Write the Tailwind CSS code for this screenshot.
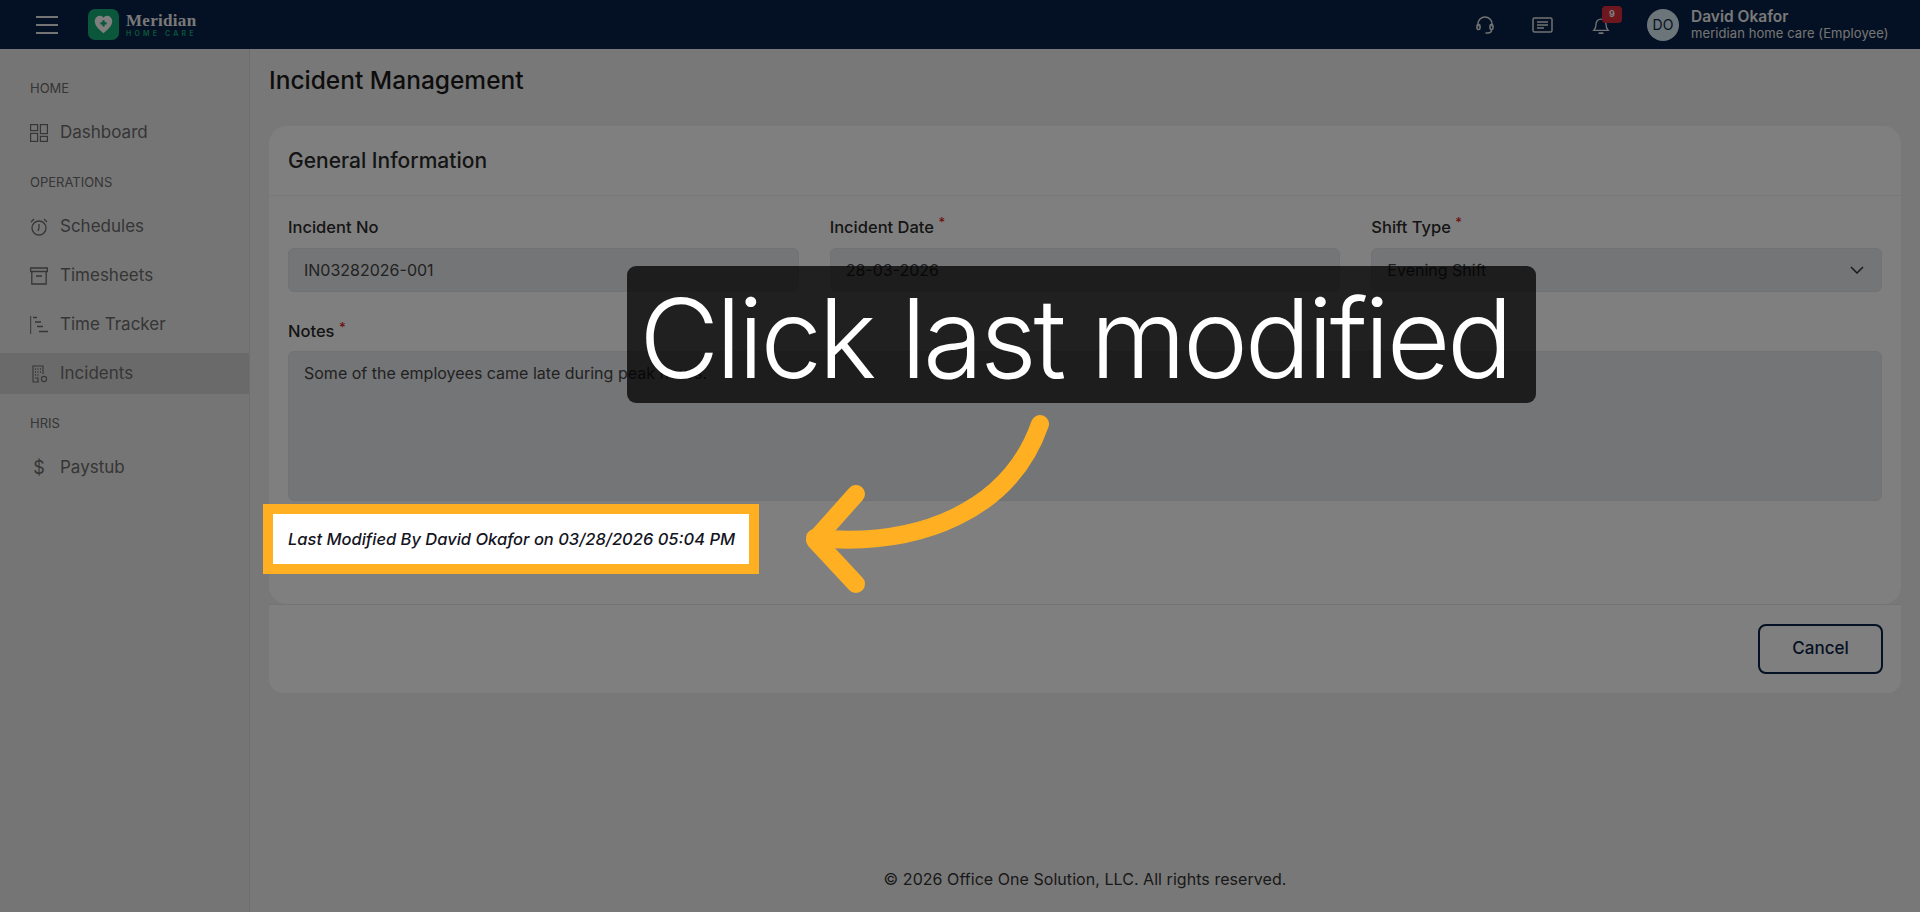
<!DOCTYPE html>
<html lang="en">
  <head>
    <meta charset="UTF-8" />
    <meta name="viewport" content="width=device-width, initial-scale=1.0" />
    <title>Incident Management</title>
    <script src="https://cdn.jsdelivr.net/npm/@tailwindcss/browser@4"></script>
  </head>
  <body class="relative h-[912px] overflow-hidden bg-[#f0f0f0] font-['Inter',sans-serif] text-[#2a2a2a]">
    <header class="flex h-[49px] items-center bg-[#082046] pr-[32px] pl-[36px]">
      <svg class="h-[20px] w-[22px] text-[#e8e8e8]" viewBox="0 0 22 20" fill="none" stroke="currentColor" stroke-width="2"><path d="M0 2h22M0 10h22M0 18h22" /></svg>
      <div class="ml-[30px] flex h-[31px] w-[31px] items-center justify-center rounded-[7px] bg-[#17ae78]">
        <svg class="h-[19px] w-[19px]" viewBox="0 0 24 24"><path d="M12 23 C7 19 1 14 1 8 C1 3.5 4.5 1 7.5 1 C9.5 1 11 2 12 3.5 C13 2 14.5 1 16.5 1 C19.5 1 23 3.500 23 8 C23 14 17 19 12 23Z" fill="#fff" /><path d="M12 6.500v8M8 10.500h8" stroke="#17ae78" stroke-width="3" /></svg>
      </div>
      <div class="ml-[7px] flex flex-col">
        <span class="font-['Liberation_Serif',serif] text-[17px] leading-[17px] font-bold tracking-[0.3px] text-[#f2f2f2]">Meridian</span>
        <span class="text-[7px] leading-[9px] font-semibold tracking-[3.200px] text-[#17ae78]">HOME CARE</span>
      </div>
      <div class="ml-auto flex items-center">
        <svg class="h-[20px] w-[18px] text-[#e4e4e4]" viewBox="0 0 18 20" fill="none" stroke="currentColor" stroke-width="1.600" stroke-linecap="round"><path d="M2 11V9a7 7 0 0 1 14 0v2" /><rect x="1" y="9.500" width="3" height="5" rx="1.400" /><rect x="14" y="9.500" width="3" height="5" rx="1.400" /><path d="M15.500 15c0 2-2 3-4 3H10" /></svg>
        <svg class="ml-[38px] h-[18px] w-[21px] text-[#e4e4e4]" viewBox="0 0 21 18" fill="none" stroke="currentColor" stroke-width="1.500"><rect x="1" y="2" width="19" height="14" rx="1.500" /><path d="M5 6h11M5 9h11M5 12h7" /></svg>
        <div class="relative ml-[39px]">
          <svg class="h-[22px] w-[18px] text-[#e4e4e4]" viewBox="0 0 20 22" fill="none" stroke="currentColor" stroke-width="1.500" stroke-linecap="round"><path d="M2 17c2-2 2.500-4 2.500-7a5.500 5.500 0 0 1 11 0c0 3 .5 5 2.500 7Z" /><path d="M8 20h4" stroke-width="2" /></svg>
          <span class="absolute -top-[8px] left-[10px] flex h-[17px] w-[20px] items-center justify-center rounded-[4px] bg-[#dc2f3f] text-[9px] font-bold text-white">9</span>
        </div>
        <div class="ml-[37px] flex h-[32px] w-[32px] items-center justify-center rounded-full bg-[#d6eaf5] text-[14px] text-[#0f2545]">DO</div>
        <div class="ml-[12px] flex w-[197px] flex-col whitespace-nowrap">
          <span class="text-[15.500px] leading-[17px] font-semibold text-[#f2f2f2]">David Okafor</span>
          <span class="text-[13px] leading-[16px] tracking-[0.08px] text-[#e8e8e8]">meridian home care (Employee)</span>
        </div>
      </div>
    </header>

    <div class="flex h-[863px]">
      <aside class="w-[250px] shrink-0 border-r border-[#dcdcdc] bg-[#ebebeb] pt-[27px] text-[#6c6c6c]">
        <p class="pl-[30px] text-[13px] leading-[24px]">HOME</p>
        <nav class="mt-[12px] mb-[17px] flex flex-col gap-[8px]">
          <a class="flex h-[41px] items-center pt-[1px] pl-[30px] text-[17px]"><svg class="mr-[12px] h-[18px] w-[18px]" viewBox="0 0 18 18" fill="none" stroke="currentColor" stroke-width="1.200"><rect x=".6" y=".6" width="7" height="6" /><rect x="10.400" y=".6" width="7" height="9" /><rect x=".6" y="9.400" width="7" height="8" /><rect x="10.400" y="12.400" width="7" height="5" /></svg>Dashboard</a>
        </nav>
        <p class="pl-[30px] text-[13px] leading-[24px]">OPERATIONS</p>
        <nav class="mt-[12px] mb-[17px] flex flex-col gap-[8px]">
          <a class="flex h-[41px] items-center pl-[30px] text-[17px]"><svg class="mr-[12px] h-[18px] w-[18px]" viewBox="0 0 18 18" fill="none" stroke="currentColor" stroke-width="1.300"><circle cx="9" cy="10" r="7" /><path d="M9 6v4l-1 3M1 4l3-3M17 4l-3-3" /></svg>Schedules</a>
          <a class="flex h-[41px] items-center pl-[30px] text-[17px]"><svg class="mr-[12px] h-[18px] w-[18px]" viewBox="0 0 18 18" fill="none" stroke="currentColor" stroke-width="1.300"><path d="M.6 1h16.800v3.500H.6zM1.800 4.500V17h14.400V4.500M6 9h6" /></svg>Timesheets</a>
          <a class="flex h-[41px] items-center pt-[1px] pl-[30px] text-[17px]"><svg class="mr-[12px] h-[18px] w-[18px]" viewBox="0 0 18 18" fill="none" stroke="currentColor" stroke-width="1.500"><path d="M.7 0v18" stroke-width="1" /><path d="M3 1.500h4M5 6h6M7 10.500h6M9 15.500h9" /></svg>Time Tracker</a>
          <a class="flex h-[41px] items-center bg-[#d5d5d5] pt-[1px] pl-[30px] text-[17px]"><svg class="mr-[12px] h-[18px] w-[18px]" viewBox="0 0 18 18" fill="none" stroke="currentColor" stroke-width="1.100"><path d="M9 17H3V1h10v8" /><path d="M5 4h1M7.500 4h1M10 4h1M5 7h1M7.500 7h1M10 7h1M5 10h1M7.500 10h1" stroke-width="1.400" /><path d="M5 13h3v4" /><circle cx="14" cy="14" r="2.600" /></svg>Incidents</a>
        </nav>
        <p class="pl-[30px] text-[13px] leading-[24px]">HRIS</p>
        <nav class="mt-[12px] flex flex-col gap-[8px]">
          <a class="flex h-[41px] items-center pl-[30px] text-[17px]"><span class="mr-[12px] w-[18px] text-center text-[18px]">$</span>Paystub</a>
        </nav>
      </aside>

      <main class="flex min-w-0 flex-1 flex-col pr-[19px] pl-[19px]">
        <h1 class="mt-[17px] text-[24.500px] leading-[28px] font-medium text-[#1a1a1a]">Incident Management</h1>
        <section class="mt-[32px] h-[478px] rounded-[18px] bg-white">
          <h2 class="flex h-[70px] items-center border-b border-[#f0f0f0] pl-[19px] text-[21px] font-medium">General Information</h2>
          <div class="grid grid-cols-3 gap-x-[31px] px-[19px] pt-[20px]">
            <div>
              <label class="block text-[16.500px] leading-[22px] font-medium">Incident No</label>
              <div class="mt-[10px] flex h-[44px] items-center rounded-[6px] border border-[#e2e4e8] bg-[#e8eaed] pl-[15px] text-[16px] text-[#444]">IN03282026-001</div>
            </div>
            <div>
              <label class="block text-[16.500px] leading-[22px] font-medium">Incident Date <span class="align-top text-[13px] leading-none text-[#e02020]">*</span></label>
              <div class="mt-[10px] flex h-[44px] items-center rounded-[6px] border border-[#e2e4e8] bg-[#e8eaed] pl-[15px] text-[16px] text-[#444]">28-03-2026</div>
            </div>
            <div>
              <label class="block text-[16.500px] leading-[22px] font-medium">Shift Type <span class="align-top text-[13px] leading-none text-[#e02020]">*</span></label>
              <div class="mt-[10px] flex h-[44px] items-center justify-between rounded-[6px] border border-[#e2e4e8] bg-[#e8eaed] pr-[17px] pl-[15px] text-[16px] text-[#444]">
                Evening Shift
                <svg class="h-[8px] w-[14px] text-[#333]" viewBox="0 0 14 8" fill="none" stroke="currentColor" stroke-width="1.500"><path d="M1 1l6 6 6-6" /></svg>
              </div>
            </div>
          </div>
          <div class="px-[19px] pt-[29px]">
            <label class="block text-[16.500px] leading-[20px] font-medium">Notes <span class="align-top text-[13px] leading-none text-[#e02020]">*</span></label>
            <div class="mt-[10px] h-[150px] rounded-[6px] border border-[#e2e4e8] bg-[#e8eaed] px-[15px] pt-[9px] text-[16px] text-[#444]">Some of the employees came late during peak hours.</div>
          </div>
        </section>
        <div class="flex h-[89px] items-center justify-end rounded-b-[14px] border-t border-[#e8e8e8] bg-white pr-[18px]">
          <button class="h-[50px] w-[125px] rounded-[8px] border-2 border-[#082046] text-[17px] font-medium text-[#082046]">Cancel</button>
        </div>
        <footer class="mt-auto pb-[23px] text-center text-[16px] leading-[20px] tracking-[0.05px] text-[#333]">© 2026 Office One Solution, LLC. All rights reserved.</footer>
      </main>
    </div>

    <!-- dim layer and the tour callouts sit on top of the page -->
    <div class="absolute inset-0 bg-black/50"></div>
    <div class="absolute top-[504px] left-[263px] flex h-[70px] w-[496px] items-center border-[10px] border-[#ffb022] bg-white pl-[15px] text-[16.500px] font-medium whitespace-nowrap text-[#15151f] italic">Last Modified By David Okafor on 03/28/2026 05:04 PM</div>
    <div class="absolute top-[266px] left-[627px] flex h-[137px] w-[909px] items-center justify-center rounded-[9px] bg-black/75 pt-[7px] pr-[14px] text-[110px] font-[350] tracking-[-3.400px] text-white">Click last modified</div>
    <svg class="absolute top-0 left-0 h-[912px] w-[1920px]" viewBox="0 0 1920 912" fill="none" stroke="#ffb022" stroke-width="18" stroke-linecap="round" stroke-linejoin="round"><path d="M1040 424C1010 510 920 548 815 538" /><path d="M856 494L815 540L856 584" /></svg>
  </body>
</html>
